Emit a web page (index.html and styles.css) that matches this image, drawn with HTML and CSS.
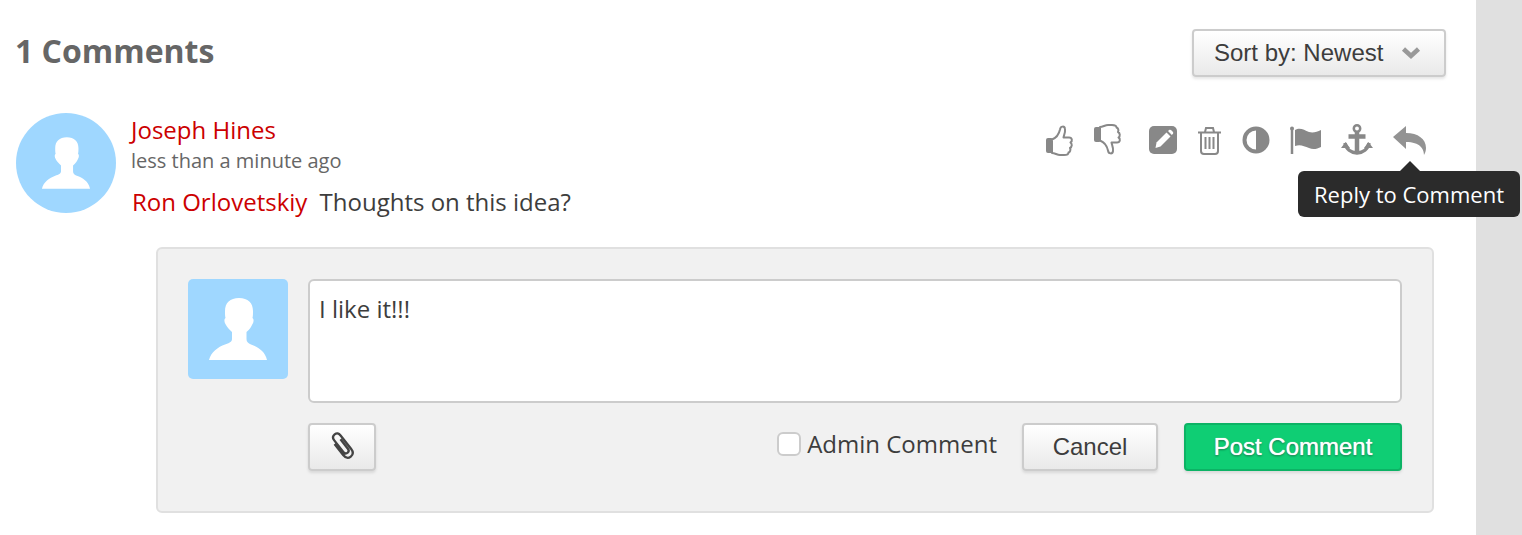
FILE: index.html
```html
<!DOCTYPE html>
<html lang="en">
<head>
  <meta charset="UTF-8">
  <title>Comments</title>
  <link rel="stylesheet" href="styles.css">
</head>
<body>
  <div class="page">
    <main class="comments">
      <div class="comments-head">
        <h2>1 Comments</h2>
        <button class="btn sort-btn" type="button">
          Sort by: Newest
          <svg class="chevron" viewBox="0 0 20 14"><path d="M2.5 3 L10 10 L17.5 3" fill="none" stroke="#999" stroke-width="4.5"/></svg>
        </button>
      </div>

      <!-- comment -->
      <div class="comment">
        <svg class="avatar round" viewBox="0 0 100 100">
          <g transform="translate(8.500 8.500) scale(.83)"><use href="#person"/></g>
        </svg>
        <div class="comment-body">
          <div class="comment-top">
            <div>
              <a class="name">Joseph Hines</a>
              <div class="time">less than a minute ago</div>
            </div>
            <div class="actions">
              <svg class="ic" width="28" height="32" viewBox="0 0 28 32"><use href="#thumb"/></svg>
              <svg class="ic" width="28" height="32" viewBox="0 0 28 32"><g transform="translate(0 32) scale(1 -1)"><use href="#thumb"/></g></svg>
              <svg class="ic edit" width="28" height="32" viewBox="0 0 28 32">
                <rect y="2" width="28" height="28" rx="5" fill="#888"/>
                <path d="M17.5 8.5 L21.5 12.5 L11.5 22.5 L6.5 24 L7.5 18.5 Z" fill="#fff"/>
                <path d="M19 7 L20.5 5.8 Q21.5 5.4 22.3 6.2 L24 8 Q24.5 9 24 9.8 L22.8 11 Z" fill="#fff"/>
              </svg>
              <svg class="ic" width="25" height="32" viewBox="0 0 25 32">
                <path d="M1 8.5 H24 M8 8 L9 4 H16 L17 8 M4 9 V27 Q4 30 7 30 H18 Q21 30 21 27 V9" fill="none" stroke="#888" stroke-width="2"/>
                <path d="M8.5 13 V25 M12.5 13 V25 M16.5 13 V25" fill="none" stroke="#888" stroke-width="2"/>
              </svg>
              <svg class="ic" width="28" height="32" viewBox="0 0 28 32">
                <circle cx="14" cy="16" r="11.5" fill="#fff" stroke="#888" stroke-width="4"/>
                <path d="M14 4 A12 12 0 0 1 14 28 Z" fill="#888"/>
              </svg>
              <svg class="ic" width="31" height="32" viewBox="0 0 31 32">
                <circle cx="2" cy="4.500" r="2" fill="#888"/>
                <path d="M2 5 V30" stroke="#888" stroke-width="2.500"/>
                <path d="M5 6 C10 3 14 6 19 8 C23 9 27 8 31 6 V23 C27 25 23 26 19 24 C14 22 10 20 5 22 Z" fill="#888"/>
              </svg>
              <svg class="ic" width="32" height="32" viewBox="0 0 32 32">
                <circle cx="16" cy="4.500" r="3.200" fill="none" stroke="#888" stroke-width="2.500"/>
                <path d="M16 8 V29 M7.500 12.500 H24.500" stroke="#888" stroke-width="4.500" fill="none"/>
                <path d="M4 19 C5 25 10 28.500 16 29 C22 28.500 27 25 28 19" fill="none" stroke="#888" stroke-width="3.500"/>
                <path d="M0 24 L4.500 18 L9 24 Z M23 24 L27.500 18 L32 24 Z" fill="#888"/>
              </svg>
              <svg class="ic" width="33" height="32" viewBox="0 0 33 32">
                <path d="M0 13 L13 2 V9 C25 9 33 15 33 24 C33 27 32 29 31 31 C31 25 27 18 13 18 V25 Z" fill="#939393"/>
              </svg>
              <div class="tooltip">Reply to Comment</div>
            </div>
          </div>
          <p class="comment-text"><a class="name">Ron Orlovetskiy</a> Thoughts on this idea?</p>
        </div>
      </div>

      <!-- reply form -->
      <form class="reply">
        <svg class="avatar" viewBox="0 0 100 100">
          <use href="#person"/>
        </svg>
        <div class="reply-main">
          <div class="reply-input">I like it!!!</div>
          <div class="reply-foot">
            <button class="btn attach" type="button">
              <svg width="30" height="32" viewBox="0 0 30 32">
                <g transform="rotate(-38 15 16)" fill="none" stroke="#444" stroke-width="2.300">
                  <path d="M11 9 V23 Q11 29 16 29 Q21 29 21 23 V6 Q21 1.500 17 1.500 Q13 1.500 13 6 V21 Q13 24 16 24 Q18.500 24 18.500 21 V9"/>
                </g>
              </svg>
            </button>
            <label class="admin-check"><span class="box"></span>Admin Comment</label>
            <button class="btn cancel" type="button">Cancel</button>
            <button class="btn post" type="button">Post Comment</button>
          </div>
        </div>
      </form>
    </main>
    <div class="side"></div>
  </div>

  <svg class="defs" width="0" height="0">
    <defs>
      <g id="person">
        <path d="M51 19 C60 19 65 24 65 32 C65 35 65 37 64.500 39 C66 40 66 43 64 46 C63 48 62 50 58.500 53 V60 C58.500 63 60 64 63 65.500 C70 68 77 72 79 81 H21 C23 73 30 68 37 65.500 C41 64 44 63 44 60 V53 C41 50 39 48 38 46 C36 43 36 40 37.500 39 C37 37 37 35 37 32 C37 24 42 19 51 19 Z" fill="#fff"/>
      </g>
      <g id="thumb">
        <rect x="0" y="14" width="7" height="15" rx="2" fill="#888"/>
        <path d="M6 15.500 C10 14 13 10 14 5.500 C14.500 2 18.500 1.500 19 5 C19.500 8 18 11 17.500 13.500 H23 C26.500 13.500 26.500 17.500 24.500 18.500 C26.500 20 26 23 24 24 C25 26 24 28 22.500 28.500 C22.500 30.500 20 31 18 31 H14 C11 31 9 29 6 29 Z" fill="#fff" stroke="#888" stroke-width="2" stroke-linejoin="round"/>
      </g>
    </defs>
  </svg>
</body>
</html>
```
FILE: styles.css
```css
* {
  box-sizing: border-box;
}
html, body {
  height: 100%;
}
body {
  margin: 0;
  font-family: 'Open Sans', sans-serif;
  color: #3d3d3d;
  background: #fff;
  overflow: hidden;
}
.page {
  display: flex;
  height: 535px;
}
.comments {
  width: 1476px;
  padding: 29px 30px 0 16px;
}
.side {
  flex: 1;
  background: #e0e0e0;
}
.defs {
  position: absolute;
}
.comments-head {
  display: flex;
  justify-content: space-between;
  align-items: center;
  height: 48px;
}
h2 {
  margin: -5px 0 0 -1px;
  font-size: 32px;
  font-weight: 700;
  color: #666;
}
.btn {
  height: 48px;
  font-family: 'Liberation Sans', sans-serif;
  font-size: 24px;
  color: #3d3d3d;
  border: 2px solid #ccc;
  border-radius: 4px;
  background: linear-gradient(#fff, #e9e9e9);
  box-shadow: 0 2px 3px rgba(0,0,0,.1);
  cursor: pointer;
}
.sort-btn {
  width: 254px;
  display: flex;
  align-items: center;
  gap: 18px;
  padding: 0 0 0 20px;
  white-space: nowrap;
}
.chevron {
  width: 20px;
  height: 14px;
}
.comment {
  display: flex;
  margin-top: 36px;
}
.avatar {
  width: 100px;
  height: 100px;
  flex-shrink: 0;
  background: #9fd7ff;
  border-radius: 5px;
}
.avatar.round {
  border-radius: 50%;
}
.comment-body {
  flex: 1;
  margin-left: 15px;
}
.comment-top {
  display: flex;
  justify-content: space-between;
}
.name {
  color: #c00;
  font-size: 24px;
  line-height: 34px;
}
.time {
  font-size: 20px;
  line-height: 28px;
  color: #666;
}
.comment-text {
  margin: 10px 0 0 1px;
  font-size: 24px;
  line-height: 34px;
}
.comment-text .name {
  margin-right: 6px;
}
.actions {
  position: relative;
  display: flex;
  gap: 20px;
  margin: 11px 20px 0 0;
  height: 32px;
}
.ic {
  display: block;
}
.edit {
  margin-left: 7px;
}
.tooltip {
  position: absolute;
  top: 47px;
  right: -94px;
  width: 222px;
  height: 46px;
  background: #2b2b2b;
  color: #fff;
  border-radius: 6px;
  font-size: 22px;
  line-height: 47px;
  text-align: center;
  white-space: nowrap;
}
.tooltip::before {
  content: "";
  position: absolute;
  top: -10px;
  left: 102px;
  border-left: 10px solid transparent;
  border-right: 10px solid transparent;
  border-bottom: 10px solid #2b2b2b;
}
.reply {
  display: flex;
  gap: 20px;
  margin: 28px 12px 0 140px;
  height: 266px;
  padding: 30px 30px 0;
  background: #f1f1f1;
  border: 2px solid #e0e0e0;
  border-radius: 6px;
}
.reply-main {
  flex: 1;
}
.reply-input {
  height: 124px;
  padding: 11px 9px;
  background: #fff;
  border: 2px solid #ccc;
  border-radius: 6px;
  font-size: 24px;
  line-height: 34px;
}
.reply-foot {
  display: flex;
  align-items: center;
  margin-top: 20px;
}
.attach {
  width: 68px;
  padding: 0;
  display: flex;
  align-items: center;
  justify-content: center;
  margin-right: auto;
}
.admin-check {
  display: flex;
  align-items: center;
  gap: 6px;
  font-size: 24px;
  margin: -7px 25px 0 0;
}
.box {
  width: 24px;
  height: 24px;
  background: #fff;
  border: 2px solid #ccc;
  border-radius: 6px;
}
.cancel {
  width: 136px;
  margin-right: 26px;
}
.post {
  width: 218px;
  color: #fff;
  background: #0fce74;
  border-color: #0cb365;
  text-shadow: 0 0 1px #fff, 0 1px 2px rgba(0,0,0,.5);
}
```
